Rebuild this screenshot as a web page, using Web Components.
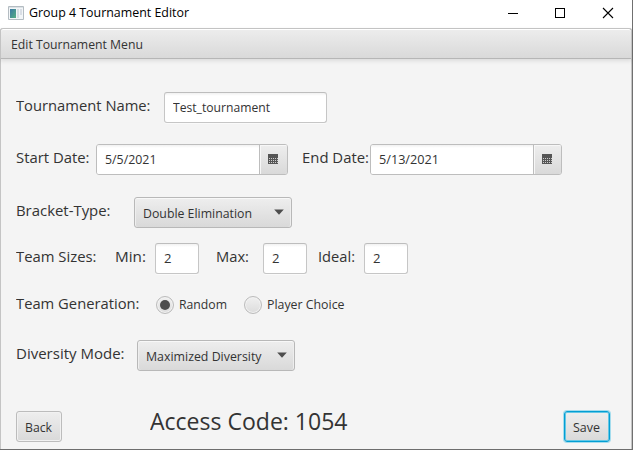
<!DOCTYPE html>
<html lang="en">
<head>
<meta charset="utf-8">
<title>Group 4 Tournament Editor</title>
<style>
html,body{margin:0;width:633px;height:450px;overflow:hidden;background:#f4f4f4}
body{font:12.6px/18px "Open Sans","Noto Sans",sans-serif;color:#333}
</style>
</head>
<body>
<editor-window></editor-window>
<script>
const define = (name, html, setup) => {
  const template = document.createElement('template');
  template.innerHTML = html;
  customElements.define(name, class extends HTMLElement {
    connectedCallback() {
      if (this.shadowRoot) return;
      this.attachShadow({mode: 'open'}).append(template.content.cloneNode(true));
      if (setup) setup(this, this.shadowRoot);
    }
  });
};

// Text condensed or widened to a given advance width.
define('fit-text', `<style>
:host{display:block;white-space:nowrap;flex:none}
span{display:inline-block;transform-origin:0 50%}
</style><span><slot></slot></span>`, (host, root) => {
  const w = parseFloat(host.getAttribute('w'));
  const span = root.querySelector('span');
  host.style.width = w + 'px';
  span.style.transform = `scaleX(${w / span.getBoundingClientRect().width})`;
});

define('form-row', `<style>
:host{display:grid;box-sizing:border-box;height:31px;grid-template-rows:31px;align-items:center;justify-content:start;padding-left:15px;flex:none}
::slotted(fit-text){font-size:15.2px;line-height:22px;padding-bottom:6px}
</style><slot></slot>`, (host) => {
  host.style.gridTemplateColumns = host.getAttribute('cols');
  host.style.marginTop = (host.getAttribute('gap') || 0) + 'px';
});

define('text-box', `<style>
:host{display:flex;box-sizing:border-box;height:31px;align-items:center;padding:1px 0 0 8px;border:1px solid #c6c6c6;border-top-color:#bdbdbd;border-radius:3px;background:linear-gradient(#f1f1f1,#fff 3px);box-shadow:0 1px 0 #fafafa}
</style><slot></slot>`);

define('date-picker', `<style>
:host{display:flex;box-sizing:border-box;height:31px;border:1px solid #bdbdbd;border-radius:3px;overflow:hidden}
.value{flex:1;display:flex;align-items:center;padding:1px 0 0 8px;background:linear-gradient(#f1f1f1,#fff 3px)}
.button{width:28px;box-sizing:border-box;border-left:1px solid #bdbdbd;background:linear-gradient(#eee,#d9d9d9);box-shadow:inset 1px 1px #f7f7f7;display:flex;align-items:center;padding-left:8px}
svg{display:block}
</style><div class="value"><slot></slot></div><div class="button"><svg width="10" height="11" shape-rendering="crispEdges"><path fill="#555" d="M0 0h10v10H0z"/><path d="M1 4.5h9M1 6.5h9M1 8.5h9" stroke="#ccc" stroke-dasharray="1 1"/></svg></div>`);

define('combo-box', `<style>
:host{display:flex;box-sizing:border-box;height:31px;align-items:center;justify-content:space-between;padding:2px 7px 0 8px;border:1px solid #b8b8b8;border-radius:3px;background:linear-gradient(#eee,#d9d9d9);box-shadow:inset 0 1px #f8f8f8,inset 1px 0 #eee,inset -1px 0 #eee}
svg{margin-top:-3px}
</style><slot></slot><svg width="10" height="6"><path d="M.2.5h9.6L5 5.8z" fill="#4d4d4d"/></svg>`);

define('push-button', `<style>
:host{display:flex;box-sizing:border-box;width:46px;height:31px;align-items:center;padding:2px 0 0 8px;border:1px solid #bcbcbc;border-radius:3px;background:linear-gradient(#eee,#d9d9d9);box-shadow:inset 0 0 0 1px #f1f1f1}
:host([default]){border-color:#039ed3;box-shadow:0 0 0 1px #a4dced,inset 0 0 0 1px #64c7e5}
</style><slot></slot>`);

define('radio-option', `<style>
:host{display:flex;align-items:center;gap:5px}
i{box-sizing:border-box;width:18px;height:18px;border:1px solid #bbb;border-radius:50%;background:linear-gradient(#f0f0f0,#dcdcdc);box-shadow:inset 0 0 0 1px #f2f2f2;display:grid;place-items:center}
:host([checked]) i::after{content:"";width:10px;height:10px;border-radius:50%;background:#4e4e4e}
::slotted(*){padding-top:1px}
</style><i></i><slot></slot>`);

define('title-bar', `<style>
:host{display:flex;height:28px;box-sizing:border-box;background:#fff;color:#000;align-items:center;padding:0 18px 3px 8px;flex:none}
fit-text{margin-left:5px;font-size:13px;padding-bottom:2px}
.controls{margin-left:auto}
svg{display:block}
</style>
<svg width="16" height="14"><defs><linearGradient id="g" x2="1" y2="1"><stop stop-color="#3b78a4"/><stop offset="1" stop-color="#57b083"/></linearGradient></defs><path d="M.5.5h15v13H.5z" fill="#f3f6f8" stroke="#b4bcc2"/><path d="M1 1h14v1H1z" fill="#dce2e6"/><path d="M2 3h6v9H2z" fill="url(#g)"/><path d="M9 3h2v9H9zM12 3h2v6h-2z" fill="#d9dee5"/></svg>
<fit-text w="160">Group 4 Tournament Editor</fit-text>
<svg class="controls" width="106" height="12"><path d="M0 6.5h10M47.5 1.5h9v9h-9z" fill="none" stroke="#000" shape-rendering="crispEdges"/><path d="M95 1l10 10M105 1L95 11" stroke="#000" stroke-width="1.1"/></svg>`);

define('menu-bar', `<style>
:host{display:flex;height:31px;box-sizing:border-box;align-items:center;padding:2px 10px 0;border:1px solid #c3c3c3;border-bottom-color:#b6b6b6;border-radius:3px 3px 0 0;margin:0 0 0 -1px;background:linear-gradient(#ededed,#d9d9d9);box-shadow:inset 0 1px #fff,0 2px 4px #0000001a;flex:none}
</style><slot></slot>`);

define('editor-window', `<style>
:host{display:flex;flex-direction:column;box-sizing:border-box;width:633px;height:450px;border-right:1px solid #707070;border-bottom:1px solid #6d6d6d;background:#fff}
main{display:flex;flex-direction:column;flex:1;box-sizing:border-box;background:#f4f4f4;border-left:1px solid #c4c4c4;border-right:1px solid #c4c4c4;border-radius:3px 3px 0 0}
menu-bar{margin-right:-1px}
form-row .code{font-size:23px;line-height:30px;padding-bottom:12px}
</style>
<title-bar></title-bar>
<main>
<menu-bar><fit-text w="132">Edit Tournament Menu</fit-text></menu-bar>
<form-row gap="33" cols="148px 163px"><fit-text w="134.5">Tournament Name:</fit-text><text-box><fit-text w="97">Test_tournament</fit-text></text-box></form-row>
<form-row gap="21" cols="80px 192px 14px 68px 192px"><fit-text w="73.5">Start Date:</fit-text><date-picker><fit-text w="51.5">5/5/2021</fit-text></date-picker><span></span><fit-text w="67">End Date:</fit-text><date-picker><fit-text w="60">5/13/2021</fit-text></date-picker></form-row>
<form-row gap="22" cols="118px 158px"><fit-text w="94.5">Bracket-Type:</fit-text><combo-box><fit-text w="109">Double Elimination</fit-text></combo-box></form-row>
<form-row gap="15" cols="99px 40px 61px 47px 55px 46px 44px"><fit-text w="80.5">Team Sizes:</fit-text><fit-text w="31">Min:</fit-text><text-box style="width:44px"><fit-text w="7.5">2</fit-text></text-box><fit-text w="33">Max:</fit-text><text-box style="width:44px"><fit-text w="7.5">2</fit-text></text-box><fit-text w="37">Ideal:</fit-text><text-box><fit-text w="7.5">2</fit-text></text-box></form-row>
<form-row gap="15" cols="140px 88px 120px"><fit-text w="123.5" style="padding-bottom:4px">Team Generation:</fit-text><radio-option checked><fit-text w="48">Random</fit-text></radio-option><radio-option><fit-text w="77.5">Player Choice</fit-text></radio-option></form-row>
<form-row gap="20" cols="121px 158px"><fit-text w="108.5">Diversity Mode:</fit-text><combo-box><fit-text w="115.5">Maximized Diversity</fit-text></combo-box></form-row>
<form-row gap="40" cols="134px 414px 46px"><push-button><fit-text w="27">Back</fit-text></push-button><fit-text class="code" w="197.5">Access Code: 1054</fit-text><push-button default><fit-text w="27">Save</fit-text></push-button></form-row>
</main>`);
</script>
</body>
</html>
